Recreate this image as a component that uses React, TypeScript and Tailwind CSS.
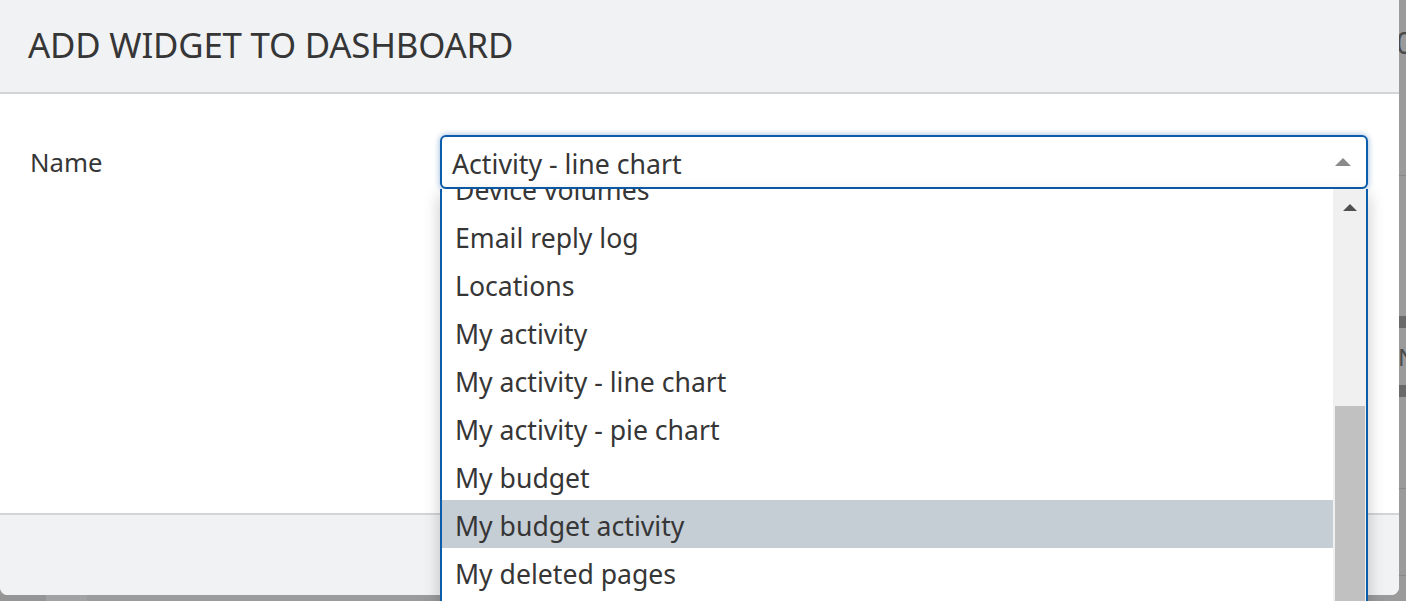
import React from "react";

const items = [
  "Device volumes",
  "Email reply log",
  "Locations",
  "My activity",
  "My activity - line chart",
  "My activity - pie chart",
  "My budget",
  "My budget activity",
  "My deleted pages",
];

export default function App() {
  const font = { fontFamily: '"Noto Sans", "Open Sans", sans-serif' };
  return (
    <div className="relative h-[601px] w-[1406px] overflow-hidden bg-[#9b9b9b]" style={font}>
      {/* dimmed page behind */}
      <div className="absolute left-[1396px] top-[28px] text-[30px] leading-none text-[#4a4a4a]">0</div>
      <div className="absolute left-[1399px] top-[175px] h-px w-[7px] bg-[#8a8a8a]" />
      <div className="absolute left-[1399px] top-[316px] h-[12px] w-[7px] bg-[#6a6a6a]" />
      <div className="absolute left-[1398px] top-[345px] text-[24px] leading-none text-[#4a4a4a]">N</div>
      <div className="absolute left-[1399px] top-[385px] h-[12px] w-[7px] bg-[#6a6a6a]" />
      <div className="absolute left-[1399px] top-[488px] h-px w-[7px] bg-[#8a8a8a]" />
      <div className="absolute left-[1399px] top-[575px] h-px w-[7px] bg-[#8a8a8a]" />
      <div className="absolute left-0 top-[595px] h-[6px] w-[46px] bg-[#959595]" />
      <div className="absolute left-[46px] top-[595px] h-[6px] w-[41px] bg-[#a2a2a2]" />

      {/* modal */}
      <div className="absolute left-0 top-0 flex h-[595px] w-[1399px] flex-col rounded-b-[8px] bg-white">
        <div className="flex h-[94px] shrink-0 items-center border-b-2 border-[#d3d4d6] bg-[#f1f2f4] pl-[28px] pb-[2px]">
          <h1 className="text-[34.8px] font-normal leading-none tracking-[-0.2px] text-[#363636]">
            ADD WIDGET TO DASHBOARD
          </h1>
        </div>
        <div className="flex flex-1 bg-white pt-[41px]">
          <div className="w-[440px] shrink-0 pl-[30px] pt-[13px] text-[25.7px] leading-[30px] text-[#363636]">
            Name
          </div>
          <div className="relative z-10 w-[928px]">
            <div className="flex h-[54px] items-center justify-between rounded-[6px] border-2 border-[#0b5cab] bg-white pl-[10px] pr-[14px] shadow-[0_0_6px_rgba(11,92,171,0.45)]">
              <span className="pt-[4px] text-[26.7px] leading-none text-[#363636]">Activity - line chart</span>
              <svg width="18" height="10" viewBox="0 0 18 10">
                <path d="M1 9 L9 1 L17 9 Z" fill="#8a8a8a" />
              </svg>
            </div>
            <div className="absolute left-0 top-[54px] flex h-[420px] w-full border-x-2 border-[#0b5cab] bg-white shadow-[0_6px_16px_rgba(0,0,0,0.22)]">
              <div className="flex-1 overflow-hidden">
                <div className="-mt-[25px] flex flex-col">
                  {items.map((it) => (
                    <div
                      key={it}
                      className={
                        "flex h-[48px] items-center pl-[13px] pt-[4px] text-[26.6px] leading-none text-[#363636] " +
                        (it === "My budget activity" ? "bg-[#c5cdd5]" : "")
                      }
                    >
                      {it}
                    </div>
                  ))}
                </div>
              </div>
              <div className="flex w-[33px] shrink-0 flex-col bg-[#f0f0f0]">
                <div className="flex h-[36px] items-center justify-center">
                  <svg width="16" height="9" viewBox="0 0 16 9">
                    <path d="M1 8 L8 1 L15 8 Z" fill="#505050" />
                  </svg>
                </div>
                <div className="ml-[2px] mr-[1px] mt-[181px] flex-1 bg-[#c1c1c1]" />
              </div>
            </div>
          </div>
        </div>
        <div className="h-[82px] shrink-0 rounded-b-[8px] border-t-2 border-[#d3d4d6] bg-[#f1f2f4]" />
      </div>
    </div>
  );
}
